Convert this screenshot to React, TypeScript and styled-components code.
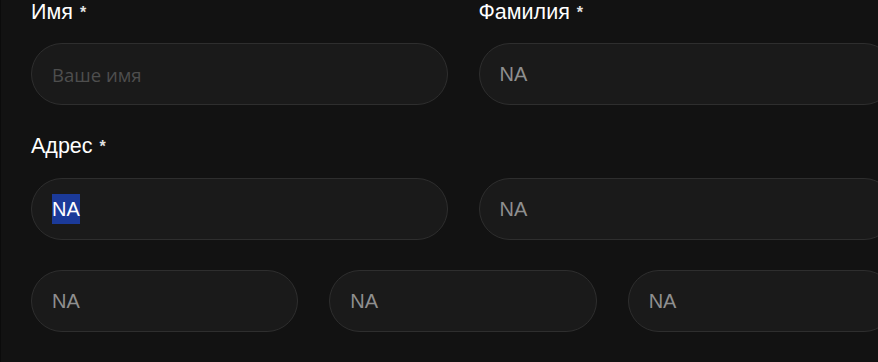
import React from "react";
import styled, { createGlobalStyle } from "styled-components";

const Global = createGlobalStyle`
  html, body {
    margin: 0;
    padding: 0;
    background: #121212;
  }
  body {
    font-family: "Liberation Sans", Arial, sans-serif;
    overflow: hidden;
  }
`;

const Page = styled.div`
  width: 878px;
  height: 362px;
  box-sizing: border-box;
  border-left: 1px solid #0b0b0b;
  padding: 0 0 0 30px;
  background: #121212;
  overflow: hidden;
`;

const Form = styled.form`
  width: 864px;
  display: flex;
  flex-direction: column;
`;

const Row = styled.div<{ $cols: number; $mt?: number }>`
  display: grid;
  grid-template-columns: repeat(${(p) => p.$cols}, 1fr);
  column-gap: 31px;
  margin-top: ${(p) => p.$mt ?? 0}px;
`;

const Group = styled.div<{ $mt?: number }>`
  display: flex;
  flex-direction: column;
  margin-top: ${(p) => p.$mt ?? 0}px;
`;

const Label = styled.label<{ $mb?: number }>`
  font-size: 21.5px;
  line-height: 24px;
  color: #ffffff;
  margin-bottom: ${(p) => p.$mb ?? 19}px;
  display: flex;
  align-items: flex-start;
  gap: 7px;
`;

const Star = styled.span`
  font-size: 16px;
  font-weight: 700;
  line-height: 16px;
  margin-top: 5px;
  color: #e0e0e0;
`;

const Field = styled.div`
  box-sizing: border-box;
  height: 62px;
  border: 1px solid #2e2e2e;
  border-radius: 31px;
  background: #1a1a1a;
  display: flex;
  align-items: center;
  padding: 0 20px;
  font-size: 20px;
  color: #8f8f8f;
  white-space: nowrap;
  overflow: hidden;
`;

const Placeholder = styled.span`
  font-family: "Open Sans", "Noto Sans", sans-serif;
  font-size: 18.5px;
  color: #4e4e4e;
`;

const Selected = styled.span`
  background: #1b3a99;
  color: #ffffff;
  line-height: 30px;
`;

export default function App() {
  return (
    <>
      <Global />
      <Page>
        <Form>
          <Row $cols={2}>
            <Group>
              <Label>
                Имя <Star>*</Star>
              </Label>
              <Field>
                <Placeholder>Ваше имя</Placeholder>
              </Field>
            </Group>
            <Group>
              <Label>
                Фамилия <Star>*</Star>
              </Label>
              <Field>NA</Field>
            </Group>
          </Row>
          <Group $mt={29}>
            <Label $mb={20}>
              Адрес <Star>*</Star>
            </Label>
            <Row $cols={2}>
              <Field>
                <Selected>NA</Selected>
              </Field>
              <Field>NA</Field>
            </Row>
            <Row $cols={3} $mt={30}>
              <Field>NA</Field>
              <Field>NA</Field>
              <Field>NA</Field>
            </Row>
          </Group>
        </Form>
      </Page>
    </>
  );
}
